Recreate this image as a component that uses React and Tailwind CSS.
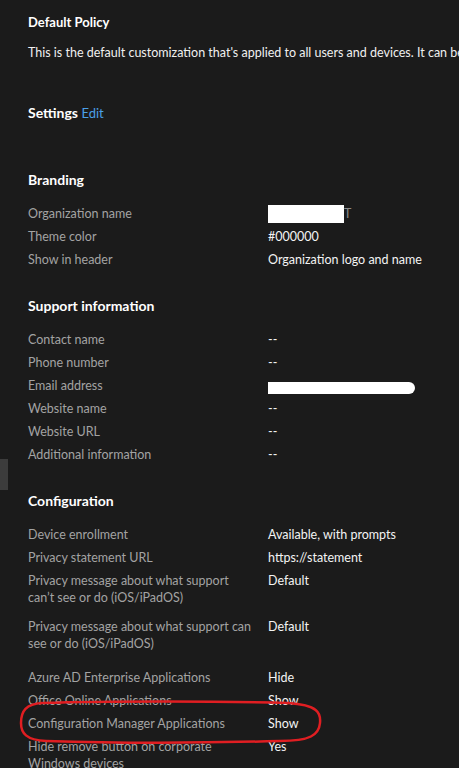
import React from "react";

const FONT = { fontFamily: 'Lato, "Open Sans", "Liberation Sans", sans-serif' };

function Row({ label, value, className = "" }) {
  return (
    <div className={`grid grid-cols-[240px_1fr] py-[3px] text-[12.5px] leading-[17px] ${className}`}>
      <div className="pr-[12px] text-[#a3a3a3]">{label}</div>
      <div className="flex h-[17px] items-center text-[#f3f3f3]">{value}</div>
    </div>
  );
}

function Heading({ children, className = "" }) {
  return (
    <div className={`text-[14px] leading-[20px] font-bold text-white ${className}`}>{children}</div>
  );
}

export default function App() {
  return (
    <div style={FONT} className="relative min-h-screen h-[768px] overflow-hidden bg-[#1b1b1b] pl-[28px] pt-[12px]">
      <div className="text-[13px] leading-[20px] font-bold text-white">Default Policy</div>
      <div className="mt-[12px] whitespace-nowrap text-[12.5px] leading-[17px] text-[#f0f0f0]">
        This is the default customization that's applied to all users and devices. It can be modified
      </div>

      <Heading className="mt-[42px]">
        Settings <span className="font-normal text-[13px] text-[#4ba0e8]">Edit</span>
      </Heading>

      <Heading className="mt-[47px] mb-[12px]">Branding</Heading>
      <Row
        label="Organization name"
        value={
          <>
            <span className="block h-[18px] w-[76px] shrink-0 bg-white" />
            <span className="text-[#8a8a8a]">T</span>
          </>
        }
      />
      <Row label="Theme color" value="#000000" />
      <Row label="Show in header" value="Organization logo and name" />

      <Heading className="mt-[25px] mb-[12px]">Support information</Heading>
      <Row label="Contact name" value="--" />
      <Row label="Phone number" value="--" />
      <Row
        label="Email address"
        value={<span className="block h-[12px] w-[147px] translate-y-[2px] rounded-r-full bg-white" />}
      />
      <Row label="Website name" value="--" />
      <Row label="Website URL" value="--" />
      <Row label="Additional information" value="--" />

      <Heading className="mt-[25px] mb-[12px]">Configuration</Heading>
      <Row label="Device enrollment" value="Available, with prompts" />
      <Row label="Privacy statement URL" value="https://statement" />
      <Row
        className="mb-[6px]"
        label="Privacy message about what support can’t see or do (iOS/iPadOS)"
        value="Default"
      />
      <Row
        className="mb-[11px]"
        label="Privacy message about what support can see or do (iOS/iPadOS)"
        value="Default"
      />
      <Row label="Azure AD Enterprise Applications" value="Hide" />
      <Row label="Office Online Applications" value="Show" />
      <Row label="Configuration Manager Applications" value="Show" />
      <Row label="Hide remove button on corporate Windows devices" value="Yes" />

      {/* scrollbar stub at the left edge */}
      <div className="absolute left-0 top-[459px] h-[31px] w-[8px] bg-[#3c3c3c]" />

      {/* red annotation */}
      <svg className="absolute left-[18px] top-[699px]" width="306" height="46" viewBox="0 0 306 46">
        <path
          d="M24 4 C90 2 200 2 270 4 C300 6 303 14 302 24 C301 36 292 42 262 42 C190 44 90 44 28 42 C8 41 3 34 3 24 C3 12 8 5 24 4 Z"
          fill="none"
          stroke="#e01e22"
          strokeWidth="2.5"
        />
      </svg>
    </div>
  );
}
